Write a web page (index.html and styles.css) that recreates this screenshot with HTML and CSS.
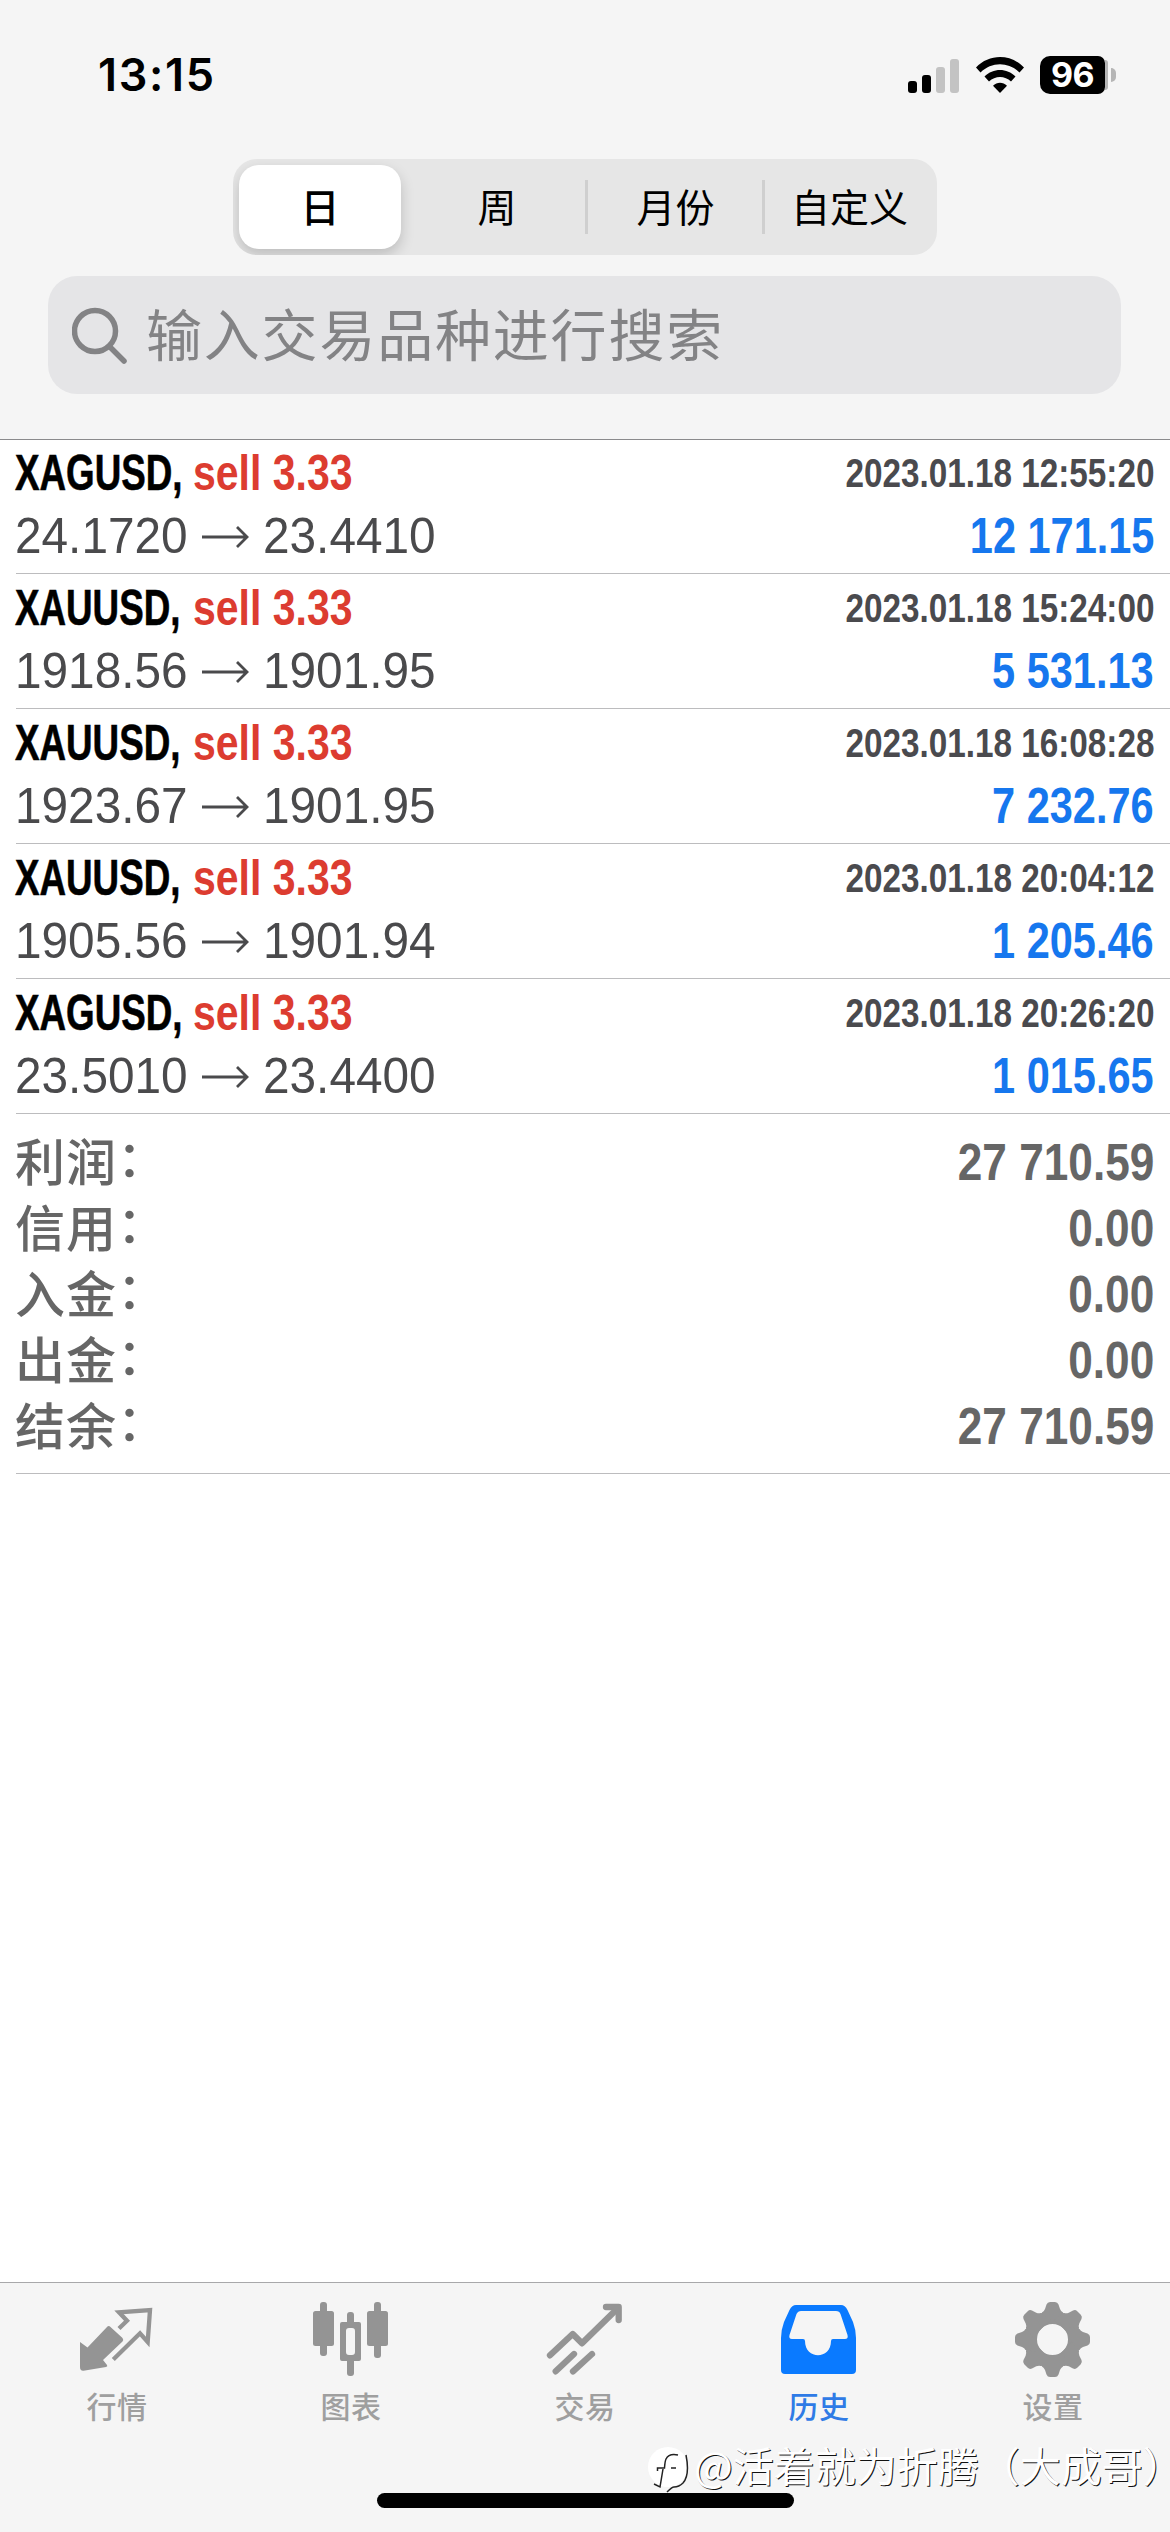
FILE: index.html
```html
<!DOCTYPE html>
<html lang="zh-CN">
<head>
<meta charset="utf-8">
<title>历史</title>
<link rel="stylesheet" href="styles.css">
</head>
<body>
<div class="screen">
  <header class="header">
    <div class="status">
      <span class="clock">13:15</span>
      <div class="status-icons">
        <svg class="signal" width="52" height="36" viewBox="0 0 52 36">
          <rect x="0" y="24" width="9" height="12" rx="3"/>
          <rect x="14" y="18" width="9" height="18" rx="3"/>
          <rect class="dim" x="28" y="10" width="9" height="26" rx="3"/>
          <rect class="dim" x="42" y="2" width="9" height="34" rx="3"/>
        </svg>
        <svg class="wifi" width="48" height="36" viewBox="0 0 48 36">
          <path d="M0 10.5C13-3.500 35-3.500 48 10.500L43.500 15.500C32.500 4.500 15.500 4.500 4.500 15.500Z"/>
          <path d="M8.500 19.500C17 10.700 31 10.700 39.500 19.500L35 24.500C29 18.500 19 18.500 13 24.500Z"/>
          <path d="M17 28.700C21 24.700 27 24.700 31 28.700L24 36Z"/>
        </svg>
        <div class="battery"><span class="battery-level">96</span><span class="battery-edge"></span><span class="battery-tip"></span></div>
      </div>
    </div>
    <nav class="segments">
      <span class="segment active">日</span>
      <span class="segment week">周</span>
      <span class="segment divided month">月份</span>
      <span class="segment divided">自定义</span>
    </nav>
    <div class="search">
      <svg width="56" height="58" viewBox="0 0 56 58"><circle cx="23" cy="25" r="20.500"/><path d="M37.500 40.500L52 55"/></svg>
      <span>输入交易品种进行搜索</span>
    </div>
  </header>

  <main class="history">
    <article class="deal">
      <div class="line"><b class="symbol">XAGUSD,</b><b class="side">sell 3.33</b><time class="time">2023.01.18 12:55:20</time></div>
      <div class="line"><span class="price">24.1720</span><svg class="arrow" viewBox="0 0 48 24"><path d="M0 12H45M35 2L45 12L35 22"/></svg><span class="price">23.4410</span><b class="profit">12 171.15</b></div>
    </article>
    <article class="deal">
      <div class="line"><b class="symbol">XAUUSD,</b><b class="side">sell 3.33</b><time class="time">2023.01.18 15:24:00</time></div>
      <div class="line"><span class="price">1918.56</span><svg class="arrow" viewBox="0 0 48 24"><path d="M0 12H45M35 2L45 12L35 22"/></svg><span class="price">1901.95</span><b class="profit">5 531.13</b></div>
    </article>
    <article class="deal">
      <div class="line"><b class="symbol">XAUUSD,</b><b class="side">sell 3.33</b><time class="time">2023.01.18 16:08:28</time></div>
      <div class="line"><span class="price">1923.67</span><svg class="arrow" viewBox="0 0 48 24"><path d="M0 12H45M35 2L45 12L35 22"/></svg><span class="price">1901.95</span><b class="profit">7 232.76</b></div>
    </article>
    <article class="deal">
      <div class="line"><b class="symbol">XAUUSD,</b><b class="side">sell 3.33</b><time class="time">2023.01.18 20:04:12</time></div>
      <div class="line"><span class="price">1905.56</span><svg class="arrow" viewBox="0 0 48 24"><path d="M0 12H45M35 2L45 12L35 22"/></svg><span class="price">1901.94</span><b class="profit">1 205.46</b></div>
    </article>
    <article class="deal">
      <div class="line"><b class="symbol">XAGUSD,</b><b class="side">sell 3.33</b><time class="time">2023.01.18 20:26:20</time></div>
      <div class="line"><span class="price">23.5010</span><svg class="arrow" viewBox="0 0 48 24"><path d="M0 12H45M35 2L45 12L35 22"/></svg><span class="price">23.4400</span><b class="profit">1 015.65</b></div>
    </article>
    <section class="summary">
      <div class="total"><span class="label">利润<i>：</i></span><b class="amount">27 710.59</b></div>
      <div class="total"><span class="label">信用<i>：</i></span><b class="amount">0.00</b></div>
      <div class="total"><span class="label">入金<i>：</i></span><b class="amount">0.00</b></div>
      <div class="total"><span class="label">出金<i>：</i></span><b class="amount">0.00</b></div>
      <div class="total"><span class="label">结余<i>：</i></span><b class="amount">27 710.59</b></div>
    </section>
  </main>

  <footer class="tabbar">
    <div class="tab">
      <svg viewBox="0 0 80 80">
        <path d="M3 42L10.500 47.500L30 27Q31.700 25 33.500 27L45.500 38Q47 40 45.500 41.500L26 60L30 65Q31 66.500 29 67L6.500 70.700Q3 71 3 67Z"/>
        <path class="outline" d="M42 28.500L50 20.700L42 12.300L73 10L70.700 42L63 33.300L36.300 59.500"/>
      </svg>
      <span>行情</span>
    </div>
    <div class="tab">
      <svg viewBox="0 0 80 80">
        <rect x="2" y="11" width="21" height="35" rx="2.500"/><rect x="9" y="2" width="7" height="54" rx="3"/>
        <rect x="36" y="12" width="7" height="14" rx="3"/><rect x="36" y="57" width="7" height="19" rx="3"/>
        <path fill-rule="evenodd" d="M31 22H48Q50 22 50 24V59Q50 61 48 61H31Q29 61 29 59V24Q29 22 31 22ZM38 28Q35 28 35 31V52Q35 55 38 55H41Q44 55 44 52V31Q44 28 41 28Z"/>
        <rect x="56" y="11" width="21" height="35" rx="2.500"/><rect x="63" y="2" width="7" height="56" rx="3"/>
      </svg>
      <span>图表</span>
    </div>
    <div class="tab">
      <svg viewBox="0 0 80 80">
        <g class="trend"><path d="M5 55.300L27.700 34L37 43.300L72 9"/><path d="M61 7H73.700V20"/><path d="M10.700 71.300L29 54"/><path d="M28 71.300L47 54"/></g>
      </svg>
      <span>交易</span>
    </div>
    <div class="tab current">
      <svg viewBox="0 0 80 80">
        <path fill-rule="evenodd" d="M17 5H62Q66 5 68.500 10L74 22Q77 30 77 38V70Q77 74 73 74H6Q2 74 2 70V38Q2 30 5 22L10.500 10Q13 5 17 5ZM22 11Q19 11 17.500 14L10.500 35Q9.500 39 13 39H24Q26 39 26 41C26 60 52 60 52 41Q52 39 54 39H66Q69.500 39 68.500 35L61.500 14Q60.500 11 57 11Z"/>
      </svg>
      <span>历史</span>
    </div>
    <div class="tab">
      <svg viewBox="0 0 80 80">
        <defs><path id="tooth" d="M29 12.500Q31 11.500 32 9L33.500 4.500Q34.500 2 37 2H42Q44.500 2 45.500 4.500L47 9Q48 11.500 50 12.500L52 24H27Z"/></defs>
        <circle class="ring" cx="39.500" cy="39.500" r="22"/>
        <use href="#tooth"/><use href="#tooth" transform="rotate(45 39.500 39.500)"/><use href="#tooth" transform="rotate(90 39.500 39.500)"/><use href="#tooth" transform="rotate(135 39.500 39.500)"/>
        <use href="#tooth" transform="rotate(180 39.500 39.500)"/><use href="#tooth" transform="rotate(225 39.500 39.500)"/><use href="#tooth" transform="rotate(270 39.500 39.500)"/><use href="#tooth" transform="rotate(315 39.500 39.500)"/>
      </svg>
      <span>设置</span>
    </div>
  </footer>
  <div class="home-bar"></div>
  <div class="watermark">
    <svg width="42" height="50" viewBox="0 0 42 50">
      <circle class="disc" cx="20" cy="21" r="20"/>
      <path d="M38 9Q42 29 35 37Q31 41 26 41Q24 41 19 46"/>
      <path d="M30 9Q21 7 18 13Q17 15 16.500 22H9.500V25M23 22H28M15 23L12 41L6 38"/>
    </svg>
    <span>@活着就为折腾（大成哥<i class="close">）</i></span>
  </div>
</div>
</body>
</html>
```
FILE: styles.css
```css
* { box-sizing: border-box; }
body { margin: 0; background: #fff; }
.screen {
  position: relative;
  display: flex;
  flex-direction: column;
  width: 1170px;
  height: 2532px;
  overflow: hidden;
  background: #fff;
  font-family: "Liberation Sans", "Noto Sans CJK SC", sans-serif;
  font-kerning: none;
  white-space: nowrap;
}

/* header */
.header {
  height: 440px;
  background: #f5f5f5;
  border-bottom: 1px solid #8a8a8c;
}
.status {
  display: flex;
  justify-content: space-between;
  align-items: center;
  height: 159px;
  padding: 0 54px 10px 98px;
}
.clock { font: 600 45px/60px Inter, sans-serif; letter-spacing: 1.7px; }
.status-icons { display: flex; align-items: center; gap: 16px; }
.dim { fill: #c3c3c3; }
.battery { display: flex; align-items: center; }
.battery-level {
  width: 65px;
  height: 38px;
  border-radius: 10px 7px 7px 10px;
  background: #000;
  color: #fff;
  font: 700 34px/38px Inter, sans-serif;
  text-align: center;
  letter-spacing: -0.5px;
}
.battery-edge { width: 3px; height: 30px; background: #b5b5b5; border-radius: 0 3px 3px 0; }
.battery-tip { width: 5px; height: 14px; margin-left: 3px; background: #b5b5b5; border-radius: 0 5px 5px 0; }

.segments {
  display: grid;
  grid-template-columns: 162px 184px 177px 175px;
  width: 704px;
  height: 96px;
  margin-left: 233px;
  padding: 6px 0 6px 6px;
  border-radius: 24px;
  overflow: hidden;
  background: #e6e6e6;
}
.segment {
  display: flex;
  justify-content: center;
  align-items: center;
  font: 400 39px/60px "Noto Sans CJK SC", sans-serif;
  padding-bottom: 4px;
}
.segment.active {
  font-weight: 500;
  background: #fff;
  border-radius: 20px;
  box-shadow: 0 6px 14px rgba(0, 0, 0, 0.18);
}
.segment.week { padding-left: 8px; }
.segment.month { padding-left: 4px; }
.divided {
  background: linear-gradient(#cfcfcf, #cfcfcf) left center / 3px 54px no-repeat;
}

.search {
  display: flex;
  align-items: center;
  width: 1073px;
  height: 118px;
  margin: 21px 0 0 48px;
  padding-left: 24px;
  gap: 18px;
  border-radius: 29px;
  background: #e5e5e7;
  color: #838385;
  font: 400 56px/80px "Noto Sans CJK SC", sans-serif;
  letter-spacing: 1.8px;
}
.search svg { fill: none; stroke: #838385; stroke-width: 5.5; stroke-linecap: round; }
.search span { margin-top: -6px; }

/* deals */
.history { flex: 1; margin-top: -1px; padding-left: 16px; }
.deal {
  height: 135px;
  padding: 3px 16px 0 0;
  border-bottom: 1px solid #bcbcbe;
}
.line { display: flex; height: 63px; line-height: 63px; font-size: 50px; }
.symbol, .side, .price { transform-origin: left; }
.symbol { width: 177px; transform: translateX(-1px) scaleX(0.735); color: #000; -webkit-text-stroke: 0.6px #000; }
.side { transform: scaleX(0.82); color: #dc3c30; }
.time {
  margin-left: auto;
  transform: scaleX(0.832);
  transform-origin: right;
  font-size: 40px;
  font-weight: 700;
  color: #4a4a4e;
}
.price { width: 172px; transform: translateX(-1px) scaleX(0.955); color: #4a4a4c; }
.arrow { width: 48px; height: 24px; margin: 20px 14px 0 14px; fill: none; stroke: #4a4a4c; stroke-width: 2.8; }
.profit { margin-left: auto; transform: scaleX(0.83); transform-origin: right; color: #1677ee; }

.summary { padding: 15px 16px 14px 0; border-bottom: 1px solid #bcbcbe; color: #666; }
.total { display: flex; justify-content: space-between; height: 66px; line-height: 66px; font-size: 52px; }
.label { margin: -3px 0 0 -1px; font: 500 50px/66px "Noto Sans CJK SC", sans-serif; letter-spacing: 1px; }
.label i { position: relative; top: -4px; font-style: normal; }
.amount { transform: scaleX(0.85); transform-origin: right; }

/* tab bar */
.tabbar {
  display: grid;
  grid-template-columns: repeat(5, 234px);
  height: 250px;
  padding-top: 17px;
  background: #f5f5f5;
  border-top: 1px solid #a8a8aa;
}
.tab {
  display: flex;
  flex-direction: column;
  align-items: center;
  gap: 3px;
  color: #9f9f9f;
  font: 500 30px/44px "Noto Sans CJK SC", sans-serif;
  letter-spacing: 0.6px;
}
.tab svg { width: 80px; height: 80px; fill: #949494; }
.tab .outline { fill: none; stroke: #949494; stroke-width: 4.3; }
.tab .trend { fill: none; stroke: #949494; stroke-width: 6.3; stroke-linecap: round; stroke-linejoin: round; }
.tab .ring { fill: none; stroke: #949494; stroke-width: 13; }
.tab.current { color: #2f7be6; }
.tab.current svg { fill: #0a7aff; }

.home-bar {
  position: absolute;
  left: 377px;
  top: 2493px;
  width: 417px;
  height: 15px;
  border-radius: 8px;
  background: #000;
}
.watermark {
  position: absolute;
  left: 648px;
  top: 2432px;
  display: flex;
  align-items: center;
  color: #fff;
  font: 400 41px/58px "Noto Sans CJK SC", sans-serif;
  text-shadow: 1px 1px 0 #111;
}
.watermark svg { margin: 14px 4px 0 0; fill: none; stroke: #222; stroke-width: 1.5; }
.watermark .disc { fill: #fff; stroke: none; }
.watermark .close { font-style: normal; font-feature-settings: "halt"; }
```
